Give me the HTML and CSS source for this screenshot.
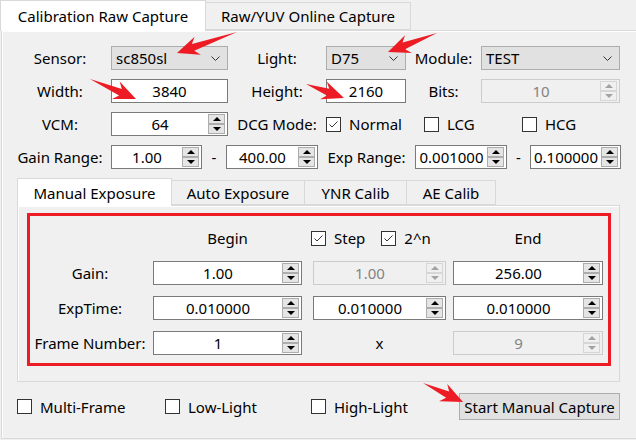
FILE: index.html
```html
<!DOCTYPE html>
<html lang="en">
<head>
<meta charset="utf-8">
<title>Calibration Raw Capture</title>
<link rel="stylesheet" href="styles.css">
</head>
<body>
<div class="app">
  <div class="tabbar">
    <div class="tab tab-sel w206">Calibration Raw Capture</div>
    <div class="tab w205">Raw/YUV Online Capture</div>
  </div>
  <div class="pane">
    <div class="form">
      <span class="lbl">Sensor:</span>
      <div class="combo"><span>sc850sl</span><svg class="chev" width="9" height="5" viewBox="0 0 9 5"><path d="M0.5 0.5 L4.5 4.5 L8.5 0.5" fill="none" stroke="#333" stroke-width="1"/></svg></div>
      <span class="lbl">Light:</span>
      <div class="combo"><span>D75</span><svg class="chev" width="9" height="5" viewBox="0 0 9 5"><path d="M0.5 0.5 L4.5 4.5 L8.5 0.5" fill="none" stroke="#333" stroke-width="1"/></svg></div>
      <span class="lbl">Module:</span>
      <div class="combo"><span>TEST</span><svg class="chev" width="9" height="5" viewBox="0 0 9 5"><path d="M0.5 0.5 L4.5 4.5 L8.5 0.5" fill="none" stroke="#333" stroke-width="1"/></svg></div>

      <span class="lbl">Width:</span>
      <div class="edit">3840</div>
      <span class="lbl">Height:</span>
      <div class="edit">2160</div>
      <span class="lbl">Bits:</span>
      <div class="spin dis"><span class="val">10</span><span class="btns"><span class="sb"><i class="up"></i></span><span class="sb"><i class="dn"></i></span></span></div>

      <span class="lbl">VCM:</span>
      <div class="spin"><span class="val">64</span><span class="btns"><span class="sb"><i class="up"></i></span><span class="sb"><i class="dn"></i></span></span></div>
      <span class="lbl">DCG Mode:</span>
      <div class="checks">
        <span class="chk"><span class="box"><svg width="13" height="13" viewBox="0 0 13 13"><path d="M2.5 6.5 L5 9 L10.5 3.5" fill="none" stroke="#333" stroke-width="1"/></svg></span>Normal</span>
        <span class="chk"><span class="box"></span>LCG</span>
        <span class="chk"><span class="box"></span>HCG</span>
      </div>
    </div>

    <div class="range">
      <span class="lbl lbl-first">Gain Range:</span>
      <div class="spin"><span class="val">1.00</span><span class="btns"><span class="sb"><i class="up"></i></span><span class="sb"><i class="dn"></i></span></span></div>
      <span class="dash">-</span>
      <div class="spin"><span class="val">400.00</span><span class="btns"><span class="sb"><i class="up"></i></span><span class="sb"><i class="dn"></i></span></span></div>
      <span class="lbl">Exp Range:</span>
      <div class="spin"><span class="val">0.001000</span><span class="btns"><span class="sb"><i class="up"></i></span><span class="sb"><i class="dn"></i></span></span></div>
      <span class="dash">-</span>
      <div class="spin"><span class="val">0.100000</span><span class="btns"><span class="sb"><i class="up"></i></span><span class="sb"><i class="dn"></i></span></span></div>
    </div>

    <div class="subtabs">
      <div class="stab stab-sel w155">Manual Exposure</div>
      <div class="stab w133">Auto Exposure</div>
      <div class="stab w102">YNR Calib</div>
      <div class="stab w89">AE Calib</div>
    </div>
    <div class="subpane">
      <div class="redbox">
        <div class="egrid">
          <span></span>
          <div class="hdr w149">Begin</div>
          <div class="hchecks">
            <span class="chk"><span class="box"><svg width="13" height="13" viewBox="0 0 13 13"><path d="M2.5 6.5 L5 9 L10.5 3.5" fill="none" stroke="#333" stroke-width="1"/></svg></span>Step</span>
            <span class="chk"><span class="box"><svg width="13" height="13" viewBox="0 0 13 13"><path d="M2.5 6.5 L5 9 L10.5 3.5" fill="none" stroke="#333" stroke-width="1"/></svg></span>2^n</span>
          </div>
          <div class="hdr w150">End</div>

          <span class="elbl">Gain:</span>
          <div class="spin w149"><span class="val">1.00</span><span class="btns"><span class="sb"><i class="up"></i></span><span class="sb"><i class="dn"></i></span></span></div>
          <div class="spin dis w133"><span class="val">1.00</span><span class="btns"><span class="sb"><i class="up"></i></span><span class="sb"><i class="dn"></i></span></span></div>
          <div class="spin w150"><span class="val">256.00</span><span class="btns"><span class="sb"><i class="up"></i></span><span class="sb"><i class="dn"></i></span></span></div>

          <span class="elbl">ExpTime:</span>
          <div class="spin w149"><span class="val">0.010000</span><span class="btns"><span class="sb"><i class="up"></i></span><span class="sb"><i class="dn"></i></span></span></div>
          <div class="spin w133"><span class="val">0.010000</span><span class="btns"><span class="sb"><i class="up"></i></span><span class="sb"><i class="dn"></i></span></span></div>
          <div class="spin w150"><span class="val">0.010000</span><span class="btns"><span class="sb"><i class="up"></i></span><span class="sb"><i class="dn"></i></span></span></div>

          <span class="elbl">Frame Number:</span>
          <div class="spin w149"><span class="val">1</span><span class="btns"><span class="sb"><i class="up"></i></span><span class="sb"><i class="dn"></i></span></span></div>
          <div class="times w133">x</div>
          <div class="spin dis w150"><span class="val">9</span><span class="btns"><span class="sb"><i class="up"></i></span><span class="sb"><i class="dn"></i></span></span></div>
        </div>
      </div>
    </div>

    <div class="bottom">
      <span class="chk"><span class="box"></span>Multi-Frame</span>
      <span class="chk"><span class="box"></span>Low-Light</span>
      <span class="chk"><span class="box"></span>High-Light</span>
      <div class="btn">Start Manual Capture</div>
    </div>
  </div>

  <svg class="arrows" width="636" height="440" viewBox="0 0 636 440">
    <g fill="#ed1c24">
      <polygon transform="translate(237 32) rotate(160.7)" points="0,0 46.6,-3.5 41.6,-9.5 63.6,0 41.6,9.5 46.6,3.5"/>
      <polygon transform="translate(437 33) rotate(158.8)" points="0,0 35.6,-3.5 30.6,-9.5 52.6,0 30.6,9.5 35.6,3.5"/>
      <polygon transform="translate(90 79) rotate(23.5)" points="0,0 33.2,-3.5 28.2,-9.5 50.2,0 28.2,9.5 33.2,3.5"/>
      <polygon transform="translate(306 84) rotate(20.2)" points="0,0 23.5,-3.5 18.5,-9.5 40.5,0 18.5,9.5 23.5,3.5"/>
      <polygon transform="translate(423 383) rotate(25.4)" points="0,0 27.3,-3.5 22.3,-9.5 44.3,0 22.3,9.5 27.3,3.5"/>
    </g>
  </svg>
</div>
</body>
</html>
```
FILE: styles.css
```css
* { box-sizing: border-box; }
html, body { margin: 0; padding: 0; }
body {
  width: 636px;
  height: 440px;
  overflow: hidden;
  background: #f0f0f0;
  font-family: "Noto Sans", "Liberation Sans", sans-serif;
  font-size: 15px;
  color: #000;
}
.app { position: relative; width: 636px; height: 440px; overflow: hidden; }

.tabbar { display: flex; align-items: flex-start; height: 30px; position: relative; z-index: 1; }
.tab {
  display: flex; align-items: center; justify-content: center;
  height: 28px; margin-top: 2px;
  background: #f0f0f0;
  border: 1px solid #d9d9d9; border-left: none;
  white-space: nowrap;
}
.tab-sel { height: 31px; margin-top: 0; background: #fff; border-left: 1px solid #d9d9d9; border-bottom: none; }
.w206 { width: 206px; }
.w205 { width: 205px; }

.pane {
  margin-left: 1px;
  width: 640px;
  height: 409px;
  border: 1px solid #d9d9d9;
  box-shadow: inset 1px 1px 0 #fff;
  padding: 15px 0 0 15px;
}

.form {
  display: grid;
  grid-template-columns: 86px 117px 82px 80px 59px 139px;
  grid-auto-rows: 24px;
  column-gap: 8px;
  row-gap: 9px;
  align-items: center;
}
.lbl { text-align: center; white-space: nowrap; }
.lbl-first { padding-right: 8px; }

.combo {
  display: flex; align-items: center;
  height: 24px;
  border: 1px solid #adadad;
  background: #e1e1e1;
  padding-left: 4px;
}
.chev { margin-left: auto; margin-right: 7px; }

.edit {
  height: 24px;
  border: 1px solid #7a7a7a;
  background: #fff;
  display: flex; align-items: center; justify-content: center;
}

.spin {
  display: flex;
  height: 24px;
  border: 1px solid #7a7a7a;
  background: #fff;
}
.spin .val { flex: 1; display: flex; align-items: center; justify-content: center; white-space: nowrap; }
.btns { display: flex; flex-direction: column; width: 19px; padding: 1px 2px 1px 0; flex: none; }
.sb {
  flex: 1;
  display: flex; align-items: center; justify-content: center;
  background: #e5e5e5;
  border: 1px solid #adadad;
}
.up { width: 0; height: 0; border-left: 4px solid transparent; border-right: 4px solid transparent; border-bottom: 4px solid #000; }
.dn { width: 0; height: 0; border-left: 4px solid transparent; border-right: 4px solid transparent; border-top: 4px solid #000; }
.spin.dis { border-color: #cccccc; background: #f0f0f0; color: #838383; }
.spin.dis .sb { border-color: #d6d6d6; background: #f0f0f0; }
.spin.dis .up { border-bottom-color: #a2a2a2; }
.spin.dis .dn { border-top-color: #a2a2a2; }

.checks { grid-column: span 3; display: grid; grid-template-columns: repeat(3, 1fr); align-items: center; }
.chk { display: flex; align-items: center; gap: 8px; white-space: nowrap; }
.box {
  width: 15px; height: 15px; flex: none;
  border: 1px solid #333;
  background: #fff;
  display: flex; align-items: center; justify-content: center;
}

.range {
  display: grid;
  grid-template-columns: 94px 91px 24px 92px 97px 92px 23px 91px;
  height: 24px;
  margin-top: 9px;
  align-items: center;
}
.dash { text-align: center; }

.subtabs { display: flex; align-items: flex-start; height: 27px; margin-top: 9px; position: relative; z-index: 1; }
.stab {
  display: flex; align-items: center; justify-content: center;
  height: 25px; margin-top: 2px;
  background: #f0f0f0;
  border: 1px solid #d9d9d9; border-left: none;
  white-space: nowrap;
}
.stab-sel { height: 28px; margin-top: 0; background: #fff; border-left: 1px solid #d9d9d9; border-bottom: none; }
.w155 { width: 155px; }
.w133 { width: 133px; }
.w102 { width: 102px; }
.w89 { width: 89px; }
.w149 { width: 149px; }
.w150 { width: 150px; }

.subpane {
  width: 603px;
  height: 177px;
  border: 1px solid #d9d9d9;
  box-shadow: inset 1px 1px 0 #fff;
  padding: 7px 0 0 9px;
}
.redbox {
  width: 584px;
  height: 153px;
  border: 3px solid #ed1c24;
  padding: 10px 0 0 4px;
}
.egrid {
  display: grid;
  grid-template-columns: 119px 160px 140px 150px;
  grid-template-rows: repeat(4, 24px);
  row-gap: 11px;
  align-items: center;
}
.elbl { text-align: center; padding-right: 7px; white-space: nowrap; }
.hdr { text-align: center; }
.hchecks { display: flex; align-items: center; gap: 16px; margin-left: -2px; }
.times { text-align: center; }

.bottom {
  display: grid;
  grid-template-columns: 148px 146px 148px 161px;
  margin-top: 11px;
  height: 27px;
  align-items: center;
}
.btn {
  height: 27px;
  border: 1px solid #adadad;
  background: #e1e1e1;
  display: flex; align-items: center; justify-content: center;
  white-space: nowrap;
}

.arrows { position: absolute; top: 0; left: 0; z-index: 5; pointer-events: none; }
```
